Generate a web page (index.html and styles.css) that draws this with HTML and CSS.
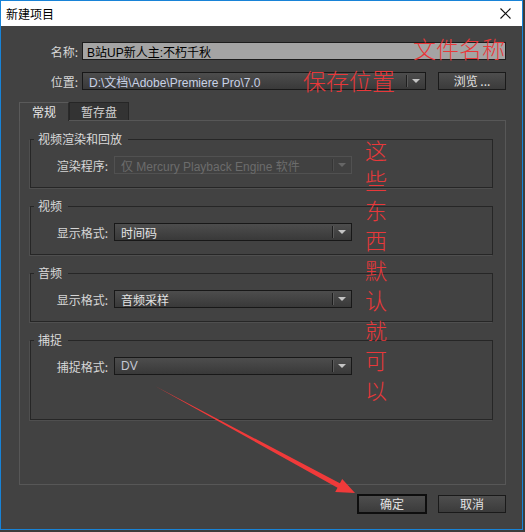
FILE: index.html
```html
<!DOCTYPE html>
<html lang="zh-CN">
<head>
    <meta charset="UTF-8">
    <title>新建项目</title>
    <link rel="stylesheet" href="styles.css">
</head>
<body>
    <div class="window">
        <div class="titlebar">
            <span class="title">新建项目</span>
            <svg class="close" width="11" height="11" viewBox="0 0 11 11">
                <path d="M0.5 0.5 L10.5 10.5 M10.5 0.5 L0.5 10.5" stroke="#111" stroke-width="1.1" fill="none"/>
            </svg>
        </div>

        <div class="dialog">
            <div class="field-row">
                <label class="row-label">名称:</label>
                <input class="name-input" type="text" value="B站UP新人主:不朽千秋" readonly>
            </div>
            <div class="field-row">
                <label class="row-label">位置:</label>
                <div class="select select-path">
                    <span class="select-text">D:\文档\Adobe\Premiere Pro\7.0</span>
                    <span class="select-arrow"><i></i></span>
                </div>
                <button class="btn btn-browse">浏览 ...</button>
            </div>

            <div class="tabs">
                <div class="tab active">常规</div>
                <div class="tab">暂存盘</div>
            </div>

            <div class="tab-panel">
                <fieldset class="group">
                    <legend>视频渲染和回放</legend>
                    <div class="group-row">
                        <label class="group-label">渲染程序:</label>
                        <div class="select disabled">
                            <span class="select-text">仅 Mercury Playback Engine 软件</span>
                            <span class="select-arrow"><i></i></span>
                        </div>
                    </div>
                </fieldset>
                <fieldset class="group">
                    <legend>视频</legend>
                    <div class="group-row">
                        <label class="group-label">显示格式:</label>
                        <div class="select">
                            <span class="select-text">时间码</span>
                            <span class="select-arrow"><i></i></span>
                        </div>
                    </div>
                </fieldset>
                <fieldset class="group">
                    <legend>音频</legend>
                    <div class="group-row">
                        <label class="group-label">显示格式:</label>
                        <div class="select">
                            <span class="select-text">音频采样</span>
                            <span class="select-arrow"><i></i></span>
                        </div>
                    </div>
                </fieldset>
                <fieldset class="group group-tall">
                    <legend>捕捉</legend>
                    <div class="group-row">
                        <label class="group-label">捕捉格式:</label>
                        <div class="select">
                            <span class="select-text select-dim">DV</span>
                            <span class="select-arrow"><i></i></span>
                        </div>
                    </div>
                </fieldset>
            </div>

            <div class="actions">
                <button class="btn btn-default">确定</button>
                <button class="btn">取消</button>
            </div>
        </div>

        <!-- red notes drawn on top of the dialog -->
        <div class="note note-name">文件名称</div>
        <div class="note note-path">保存位置</div>
        <div class="note note-side">这些东西默认就可以</div>
        <svg class="note-arrow" width="523" height="530" viewBox="0 0 523 530">
            <polygon points="155,386 339.9,483.3 342.2,478.9 355,493 335.2,492.1 337.5,487.7" fill="#f03a3a"/>
        </svg>
    </div>
</body>
</html>
```

FILE: styles.css
```css
body {
    margin: 0;
    background-color: #3c3c3c;
    font-family: "Liberation Sans", "Noto Sans CJK SC", sans-serif;
    font-size: 12px;
}

.window {
    position: relative;
    box-sizing: border-box;
    width: 523px;
    height: 530px;
    border: 1px solid #1883d7;
    display: flex;
    flex-direction: column;
    background-color: #424242;
}

.titlebar {
    height: 25px;
    background-color: #fff;
    display: flex;
    align-items: center;
    justify-content: space-between;
    padding: 0 11px 0 5px;
}

.title {
    font-family: "Noto Sans CJK SC", sans-serif;
    font-size: 12px;
    color: #000;
}

.dialog {
    flex: 1;
    padding: 16px 0 0 0;
    color: #d6d6d6;
}

.field-row {
    display: flex;
    align-items: center;
    height: 18px;
    margin: 0 16px 12px 0;
}

.row-label {
    width: 77px;
    margin-right: 4px;
    text-align: right;
    font-family: "Noto Sans CJK SC", sans-serif;
}

.name-input {
    flex: 1;
    box-sizing: border-box;
    height: 18px;
    margin: 0;
    padding: 0 4px;
    border: 1px solid #1c1c1c;
    background-color: #a4a4a4;
    color: #000;
    font-family: "Liberation Sans", "Noto Sans CJK SC", sans-serif;
    font-size: 12px;
    outline: none;
}

.select {
    box-sizing: border-box;
    height: 18px;
    display: flex;
    align-items: center;
    border: 1px solid #181818;
    background: linear-gradient(#4d4d4d, #393939);
    color: #e4e4e4;
}

.select-path {
    flex: 1;
    color: #c9d2e6;
}

.select-text {
    flex: 1;
    padding-left: 6px;
    white-space: nowrap;
    overflow: hidden;
    font-family: "Liberation Sans", "Noto Sans CJK SC", sans-serif;
}

.select-dim {
    color: #c4c8d4;
}

.select-arrow {
    width: 18px;
    height: 12px;
    border-left: 1px solid #1e1e1e;
    box-shadow: inset 1px 0 0 #5a5a5a;
    display: flex;
    align-items: center;
    justify-content: center;
}

.select-arrow i {
    width: 0;
    height: 0;
    border-left: 4px solid transparent;
    border-right: 4px solid transparent;
    border-top: 4px solid #c4c4c4;
}

.select.disabled {
    border-color: #515151;
    background: #414141;
    color: #6c6c6c;
}

.select.disabled .select-arrow {
    border-left-color: #363636;
    box-shadow: inset 1px 0 0 #4e4e4e;
}

.select.disabled .select-arrow i {
    border-top-color: #666;
}

.btn {
    box-sizing: border-box;
    height: 18px;
    padding: 0;
    border: 1px solid #1a1a1a;
    background: linear-gradient(#4e4e4e, #3b3b3b);
    color: #e2e2e2;
    font-family: "Noto Sans CJK SC", sans-serif;
    font-size: 12px;
    line-height: 16px;
    cursor: pointer;
}

.btn-browse {
    width: 68px;
    margin-left: 12px;
}

.tabs {
    display: flex;
    margin: 0 0 0 18px;
    height: 18px;
}

.tab {
    box-sizing: border-box;
    height: 18px;
    padding: 0 10px;
    border: 1px solid #262626;
    border-bottom: none;
    background-color: #333;
    color: #d0d0d0;
    font-family: "Noto Sans CJK SC", sans-serif;
    line-height: 17px;
    text-align: center;
}

.tab.active {
    position: relative;
    z-index: 1;
    width: 50px;
    height: 19px;
    border-color: #5a5a5a;
    border-right-color: #2a2a2a;
    background-color: #424242;
    color: #e6e6e6;
}

.tab + .tab {
    width: 60px;
}

.tab-panel {
    box-sizing: border-box;
    height: 365px;
    margin: 0 16px 0 18px;
    padding: 11px 12px 0 10px;
    border: 1px solid #575757;
}

.group {
    margin: 0 0 11px 0;
    padding: 10px 0 13px 0;
    min-width: 0;
    border: 1px solid #262626;
    box-shadow: -1px 1px 0 #4f4f4f;
}

.group legend {
    margin-left: 3px;
    padding: 0 6px 0 4px;
    line-height: 14px;
    font-family: "Noto Sans CJK SC", sans-serif;
    color: #dadada;
}

.group-tall {
    padding-bottom: 44px;
}

.group-row {
    display: flex;
    align-items: center;
}

.group-label {
    width: 77px;
    margin-right: 6px;
    text-align: right;
    font-family: "Noto Sans CJK SC", sans-serif;
}

.group-row .select {
    width: 238px;
}

.actions {
    display: flex;
    justify-content: flex-end;
    align-items: center;
    gap: 11px;
    margin: 9px 16px 0 0;
}

.actions .btn {
    width: 68px;
}

.actions .btn-default {
    width: 70px;
    height: 20px;
    border: 2px solid #0e0e0e;
}

/* red hand-written notes */
.note {
    position: absolute;
    color: #e8383a;
    font-family: "Noto Sans CJK SC", sans-serif;
    font-weight: 300;
    font-size: 23px;
    line-height: 23px;
    white-space: nowrap;
}

.note-name {
    left: 412px;
    top: 36px;
}

.note-path {
    left: 302px;
    top: 68px;
}

.note-side {
    left: 364px;
    top: 133px;
    width: 22px;
    font-size: 22px;
    line-height: 30px;
    white-space: normal;
}

.note-arrow {
    position: absolute;
    left: -1px;
    top: -1px;
}
```
